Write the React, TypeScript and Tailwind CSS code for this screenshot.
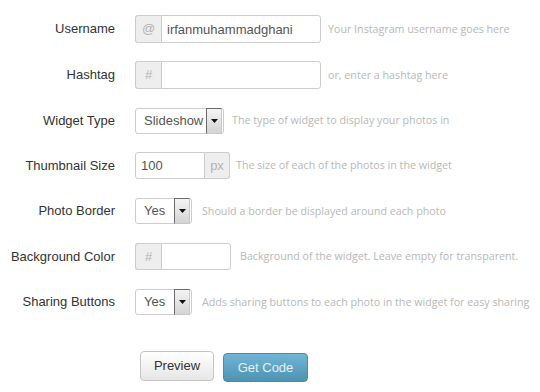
function Addon({ children, side }: { children: string; side: 'left' | 'right' }) {
  return (
    <span
      className={
        'flex h-full items-center justify-center border border-[#ccc] bg-[#eee] text-[13px] text-[#b3b3b3] ' +
        (side === 'left' ? 'w-[26px] rounded-l-[3px] border-r-0' : 'w-[25px] rounded-r-[3px] border-l-0')
      }
    >
      {children}
    </span>
  )
}

function Select({ value, width }: { value: string; width: string }) {
  return (
    <div className={'flex h-[26px] items-stretch rounded-[3px] border border-[#ccc] bg-white ' + width}>
      <span className="flex flex-1 items-center pl-[8px] text-[13px] text-[#555]">{value}</span>
      <span className="my-[-1px] mr-[1px] flex w-[16px] items-center justify-center border border-[#6b6b6b] border-r-[#c8c8c8] border-b-[#c8c8c8] bg-gradient-to-b from-[#f4f4f4] to-[#d4d4d4]">
        <svg width="7" height="4" viewBox="0 0 7 4">
          <path d="M0 0h7L3.5 4z" fill="#111" />
        </svg>
      </span>
    </div>
  )
}

function Row({ label, h, help, helpGap, children }: { label: string; h: string; help: string; helpGap: string; children: React.ReactNode }) {
  return (
    <div className={'flex items-center ' + h}>
      <label className="w-[115px] shrink-0 text-right text-[13px] text-[#333]">{label}</label>
      <div className="ml-[20px] flex items-center">
        {children}
        <span className={"font-['Open_Sans'] text-[10.7px] text-[#b8b8b8] " + helpGap}>{help}</span>
      </div>
    </div>
  )
}

export default function App() {
  return (
    <div className="h-[392px] w-[540px] bg-white pt-[6px] font-['Liberation_Sans',Arial,sans-serif]">
      <Row label="Username" h="h-[46px]" help="Your Instagram username goes here" helpGap="ml-[7px]">
        <div className="flex h-[28px]">
          <Addon side="left">@</Addon>
          <input
            readOnly
            value="irfanmuhammadghani"
            className="h-full w-[160px] rounded-r-[3px] border border-[#ccc] px-[5px] text-[13px] text-[#555] outline-none"
          />
        </div>
      </Row>
      <Row label="Hashtag" h="h-[46px]" help="or, enter a hashtag here" helpGap="ml-[7px]">
        <div className="flex h-[28px]">
          <Addon side="left">#</Addon>
          <input readOnly className="h-full w-[160px] rounded-r-[3px] border border-[#ccc] px-[5px] text-[13px] outline-none" />
        </div>
      </Row>
      <Row label="Widget Type" h="h-[45px]" help="The type of widget to display your photos in" helpGap="ml-[8px]">
        <Select value="Slideshow" width="w-[89px]" />
      </Row>
      <Row label="Thumbnail Size" h="h-[45px]" help="The size of each of the photos in the widget" helpGap="ml-[6px]">
        <div className="flex h-[27px]">
          <input
            readOnly
            value="100"
            className="h-full w-[70px] rounded-l-[3px] border border-[#ccc] px-[5px] text-[13px] text-[#555] outline-none"
          />
          <Addon side="right">px</Addon>
        </div>
      </Row>
      <Row label="Photo Border" h="h-[46px]" help="Should a border be displayed around each photo" helpGap="ml-[10px]">
        <Select value="Yes" width="w-[57px]" />
      </Row>
      <Row label="Background Color" h="h-[45px]" help="Background of the widget. Leave empty for transparent." helpGap="ml-[9px]">
        <div className="flex h-[27px]">
          <Addon side="left">#</Addon>
          <input readOnly className="h-full w-[70px] rounded-r-[3px] border border-[#ccc] px-[5px] text-[13px] outline-none" />
        </div>
      </Row>
      <Row label="Sharing Buttons" h="h-[46px]" help="Adds sharing buttons to each photo in the widget for easy sharing" helpGap="ml-[10px]">
        <Select value="Yes" width="w-[57px]" />
      </Row>
      <div className="mt-[26px] flex items-start gap-[9px] pl-[140px]">
        <button className="h-[30px] w-[74px] rounded-[4px] border border-[#c5c5c5] bg-gradient-to-b from-white to-[#e6e6e6] text-[13px] text-[#333]">
          Preview
        </button>
        <button className="mt-[2px] h-[29px] w-[85px] rounded-[4px] border border-[#4b8aa8] bg-gradient-to-b from-[#70b5d6] to-[#4f93b3] text-[13px] text-[#e3f0f6]">
          Get Code
        </button>
      </div>
    </div>
  )
}
